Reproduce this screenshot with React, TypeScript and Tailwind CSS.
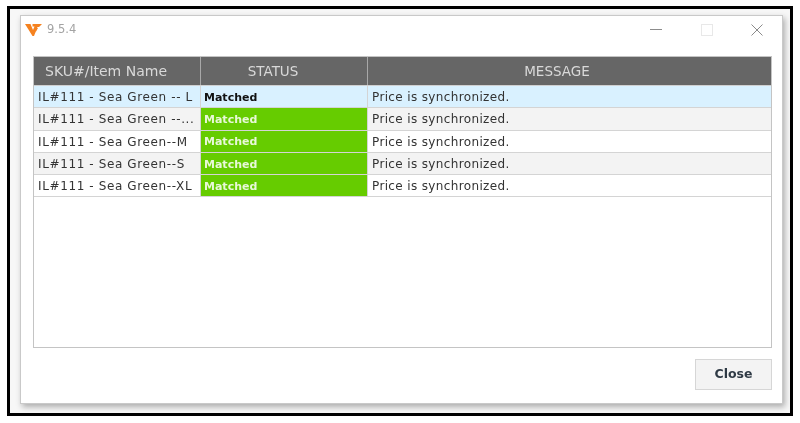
const rows = [
  { name: "IL#111 - Sea Green -- L", selected: true },
  { name: "IL#111 - Sea Green --..." },
  { name: "IL#111 - Sea Green--M" },
  { name: "IL#111 - Sea Green--S" },
  { name: "IL#111 - Sea Green--XL" },
];

function Logo() {
  return (
    <svg width="17" height="12" viewBox="0 0 17 12" className="shrink-0">
      <path d="M0 0h5.500l2.500 6 1.500-3.500H7.500V0H17l-3 3h-1.500L9 12H7.500z" fill="#f58220" />
      <path d="M10.500 4h2.500l-2.500 4.500z" fill="#f58220" />
    </svg>
  );
}

export default function App() {
  return (
    <div className="w-[800px] h-[423px] bg-white pl-[7px] pt-[6px] font-['DejaVu_Sans',sans-serif] overflow-hidden blur-[0.4px]">
      <div className="w-[786px] h-[410px] border-[3px] border-black bg-[#f7f7f7] pl-[10px] pt-[6px]">
        <div className="w-[763px] h-[389px] bg-white border border-[#c9c9c9] shadow-[2px_3px_6px_rgba(0,0,0,0.3)] flex flex-col">
          <div className="h-[27px] flex items-center pl-[4px] pr-[18px] shrink-0">
            <Logo />
            <span className="ml-[5px] pt-[1px] text-[11.500px] text-[#a3a3a3]">9.5.4</span>
            <div className="ml-auto flex items-center">
              <div className="w-[12px] h-[1px] bg-[#8c8c8c]" />
              <div className="ml-[39px] w-[12px] h-[12px] border border-[#e8e8e8]" />
              <svg width="14" height="14" viewBox="0 0 14 14" className="ml-[37px]">
                <path d="M1.500 1.500l11 11M12.500 1.500l-11 11" stroke="#8a8a8a" strokeWidth="1" fill="none" />
              </svg>
            </div>
          </div>

          <div className="ml-[12px] mt-[13px] w-[739px] h-[292px] border border-[#c4c4c4] flex flex-col shrink-0">
            <div className="flex h-[29px] bg-[#666666] text-[13.500px] text-[#d9d9d9] border-b border-[#d0d0d0] shrink-0">
              <div className="w-[167px] pl-[11px] flex items-center text-[14px] border-r border-[#a8a8a8]">SKU#/Item Name</div>
              <div className="w-[167px] pr-[22px] flex items-center justify-center border-r border-[#a8a8a8]">STATUS</div>
              <div className="flex-1 pr-[25px] flex items-center justify-center">MESSAGE</div>
            </div>
            {rows.map((row, i) => (
              <div
                key={i}
                className={`flex h-[22.250px] text-[#333333] border-b border-[#d4d4d4] ${
                  row.selected ? "bg-[#d9f1ff]" : i % 2 === 1 ? "bg-[#f3f3f3]" : "bg-white"
                }`}
              >
                <div className="w-[167px] pl-[4px] pt-[1px] flex items-center text-[12px] tracking-[0.62px] whitespace-nowrap overflow-hidden border-r border-[#d4d4d4]">
                  {row.name}
                </div>
                <div
                  className={`w-[167px] pl-[3px] pt-[3px] flex items-center text-[11px] font-bold border-r border-[#d4d4d4] ${
                    row.selected ? "text-[#111111]" : "bg-[#66cc00] text-[#e8f8d8]"
                  }`}
                >
                  Matched
                </div>
                <div className="flex-1 pl-[4px] pt-[1px] flex items-center text-[12px] tracking-[0.36px]">Price is synchronized.</div>
              </div>
            ))}
          </div>

          <div className="flex justify-end pr-[10px] pt-[11px]">
            <button className="w-[77px] h-[31px] bg-[#f3f3f3] border border-[#d6d6d6] text-[12.500px] font-bold text-[#2f3a45]">
              Close
            </button>
          </div>
        </div>
      </div>
    </div>
  );
}
